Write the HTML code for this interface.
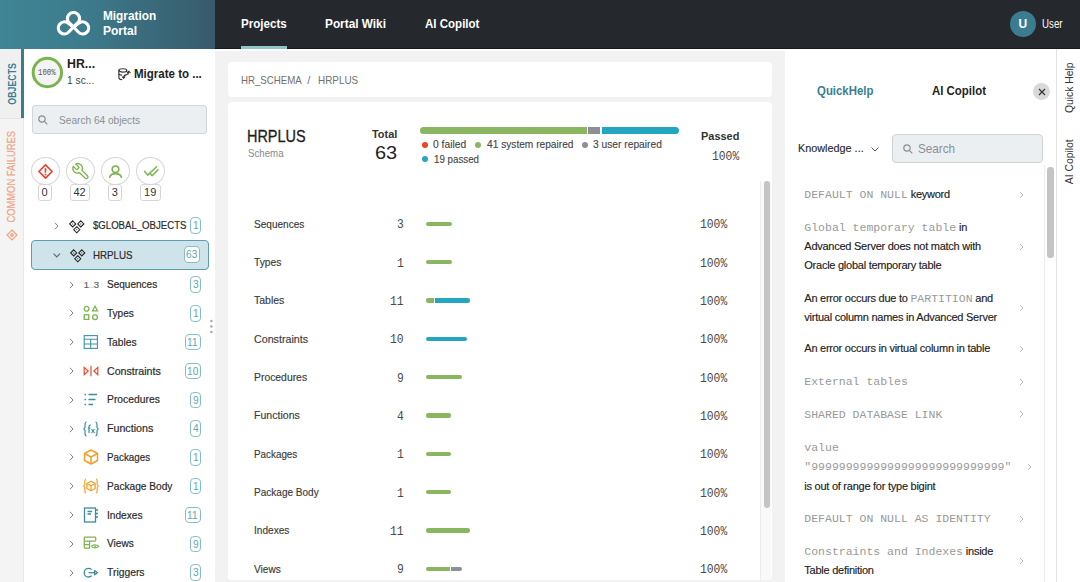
<!DOCTYPE html>
<html><head><meta charset="utf-8"><style>
*{box-sizing:border-box;margin:0;padding:0}
html,body{width:1080px;height:582px;overflow:hidden;background:#f2f2f2;font-family:"Liberation Sans",sans-serif}
.b{position:absolute}
.t{position:absolute;white-space:nowrap;transform-origin:0 0}
.vt{position:absolute;display:flex;align-items:center;justify-content:center}
.vt span{display:block;transform:rotate(-90deg);white-space:nowrap;line-height:1}
.m{font-family:"Liberation Mono",monospace;color:#999;-webkit-text-stroke:0;font-size:11.5px;letter-spacing:0}
</style></head><body>
<div class="b" style="left:0px;top:0px;width:1080px;height:49px;background:#25282d"></div>
<div class="b" style="left:0px;top:0px;width:215px;height:49px;background:linear-gradient(90deg,#3f8595 0%,#3c7b8c 40%,#3a6b7c 68%,#385a6b 100%)"></div>
<svg class="b" style="left:50px;top:5px;" width="45" height="37" viewBox="0 0 45 37"><g fill="none" stroke="#fff" stroke-width="3.2" stroke-linejoin="round"><path d="M23.50 22.00 L27.69 18.03 A6.1 6.1 0 1 0 19.31 18.03 Z"/><path d="M23.50 22.00 L17.87 18.01 A6.0 6.0 0 1 0 18.76 27.02 Z"/><path d="M23.50 22.00 L28.24 27.02 A6.0 6.0 0 1 0 29.13 18.01 Z"/></g></svg>
<div class="t" style="left:103.20px;top:9.82px;font-size:12.5px;line-height:12.5px;color:#fff;font-weight:bold;transform:scaleX(0.944);">Migration</div>
<div class="t" style="left:103.20px;top:24.62px;font-size:12.5px;line-height:12.5px;color:#fff;font-weight:bold;transform:scaleX(0.960);">Portal</div>
<div class="t" style="left:240.60px;top:17.82px;font-size:12.5px;line-height:12.5px;color:#fff;font-weight:bold;transform:scaleX(0.929);">Projects</div>
<div class="t" style="left:325.30px;top:17.82px;font-size:12.5px;line-height:12.5px;color:#fff;font-weight:bold;transform:scaleX(0.945);">Portal Wiki</div>
<div class="t" style="left:424.80px;top:17.82px;font-size:12.5px;line-height:12.5px;color:#fff;font-weight:bold;transform:scaleX(0.922);">AI Copilot</div>
<div class="b" style="left:215px;top:48px;width:865px;height:1px;background:#17191d"></div>
<div class="b" style="left:241px;top:46px;width:46px;height:3px;background:#8ec6c9"></div>
<div class="b" style="left:1010px;top:11px;width:26px;height:26px;background:#3a7d90;border-radius:50%"></div>
<div class="t" style="left:1018.50px;top:17.74px;font-size:12px;line-height:12px;color:#fff;font-weight:bold;">U</div>
<div class="t" style="left:1041.50px;top:17.74px;font-size:12px;line-height:12px;color:#fff;transform:scaleX(0.810);">User</div>
<div class="b" style="left:0px;top:49px;width:24px;height:533px;background:#f4f4f4"></div>
<div class="b" style="left:0px;top:49px;width:21px;height:69px;background:#f0f0f0"></div>
<div class="b" style="left:21px;top:49px;width:3px;height:69px;background:#3a7d90"></div>
<div class="b" style="left:0px;top:118px;width:23px;height:1px;background:#e2e2e2"></div>
<div class="b" style="left:23px;top:118px;width:1px;height:464px;background:#e6e6e6"></div>
<div class="vt" style="left:5.5px;top:62px;width:14px;height:43px;color:#3a7d90"><span style="font-size:11.8px;font-weight:bold;transform:rotate(-90deg) scaleX(0.745)">OBJECTS</span></div>
<div class="vt" style="left:5.5px;top:130px;width:14px;height:93px;color:#f0a383"><span style="font-size:11.5px;transform:rotate(-90deg) scaleX(0.814);-webkit-text-stroke:0.2px #f0a383">COMMON FAILURES</span></div>
<svg class="b" style="left:6px;top:229px;" width="12" height="12" viewBox="0 0 12 12"><g fill="none" stroke="#f0a383" stroke-width="1.2"><path d="M6 1 L11 6 L6 11 L1 6 Z"/><path d="M4.5 6 L6 4.5 L7.5 6 L6 7.5Z"/></g></svg>
<div class="b" style="left:24px;top:49px;width:191px;height:533px;background:#fff"></div>
<svg class="b" style="left:31px;top:56px;" width="33" height="33" viewBox="0 0 33 33"><circle cx="16.35" cy="16.5" r="14.2" fill="#f4f4f4" stroke="#7cb34f" stroke-width="3"/></svg>
<div class="t" style="left:38.00px;top:69.31px;font-size:8.6px;line-height:8.6px;color:#555;font-family:'Liberation Mono',monospace;transform:scaleX(0.850);">100%</div>
<div class="t" style="left:67.30px;top:57.92px;font-size:12.5px;line-height:12.5px;color:#222;font-weight:bold;transform:scaleX(0.986);">HR...</div>
<div class="t" style="left:67.30px;top:75.09px;font-size:11px;line-height:11px;color:#444;transform:scaleX(0.930);">1 sc...</div>
<svg class="b" style="left:114px;top:64px;" width="20" height="20" viewBox="0 0 20 20"><g fill="none" stroke="#333" stroke-width="1.1" stroke-linecap="round"><ellipse cx="8.8" cy="6.4" rx="3.9" ry="1.7"/><path d="M4.9 6.4 V13.5 C4.9 15 6.3 15.6 7.8 15.6"/><path d="M4.9 10 C5.2 10.8 6.4 11.1 7.6 11.1"/><path d="M12.7 6.4 V7.5"/><path d="M9.6 13.6 C9.8 11.6 11 10.8 12.6 10.6 C13.8 10.4 14.6 9.6 14.8 8.2"/><path d="M13.3 8.6 L14.8 7.2 L16.2 8.6"/><path d="M8.3 12.8 L9.6 14.2 L10.9 12.8"/></g></svg>
<div class="t" style="left:134.00px;top:67.82px;font-size:12.5px;line-height:12.5px;color:#222;font-weight:bold;transform:scaleX(0.921);">Migrate to ...</div>
<div class="b" style="left:32px;top:105px;width:175px;height:29px;background:#eceff1;border:1px solid #d3d6d8;border-radius:3px"></div>
<svg class="b" style="left:38px;top:115px;" width="10" height="10" viewBox="0 0 10 10"><g fill="none" stroke="#8a8f94" stroke-width="1.2"><circle cx="4" cy="4" r="3.2"/><path d="M6.3 6.3 L9.3 9.3"/></g></svg>
<div class="t" style="left:58.50px;top:114.59px;font-size:11px;line-height:11px;color:#8a8f94;transform:scaleX(0.920);">Search 64 objects</div>
<div class="b" style="left:30.5px;top:156.5px;width:29px;height:28.5px;border:1px solid #d6d6d6;border-radius:50%;background:#fff"></div>
<svg class="b" style="left:30.5px;top:156.5px;" width="29" height="29" viewBox="0 0 29 29"><g fill="none" stroke="#e8452c" stroke-width="1.7"><path d="M14.5 7.9 L21.1 14.5 L14.5 21.1 L7.9 14.5Z" stroke-linejoin="round"/></g><path d="M14.5 11.2 V15.6" stroke="#e8452c" stroke-width="1.7"/><circle cx="14.5" cy="17.6" r="1" fill="#e8452c"/></svg>
<div class="b" style="left:65.5px;top:156.5px;width:29px;height:28.5px;border:1px solid #d6d6d6;border-radius:50%;background:#fff"></div>
<svg class="b" style="left:65.5px;top:156.5px;" width="29" height="29" viewBox="0 0 29 29"><svg x="5.3" y="5" width="19" height="19" viewBox="0 0 24 24"><g transform="translate(24,0) scale(-1,1)"><path d="M14.7 6.3a1 1 0 0 0 0 1.4l1.6 1.6a1 1 0 0 0 1.4 0l3.77-3.77a6 6 0 0 1-7.94 7.94l-6.91 6.91a2.12 2.12 0 0 1-3-3l6.91-6.91a6 6 0 0 1 7.94-7.94l-3.76 3.76z" fill="none" stroke="#7cb34f" stroke-width="1.7" stroke-linejoin="round"/></g></svg></svg>
<div class="b" style="left:100.5px;top:156.5px;width:29px;height:28.5px;border:1px solid #d6d6d6;border-radius:50%;background:#fff"></div>
<svg class="b" style="left:100.5px;top:156.5px;" width="29" height="29" viewBox="0 0 29 29"><g fill="none" stroke="#7cb34f" stroke-width="1.6" stroke-linecap="round"><circle cx="14.5" cy="12.3" r="3.3"/><path d="M8.6 20.2 C9.4 17.8 11.6 16.6 14.5 16.6 C17.4 16.6 19.6 17.8 20.4 20.2"/></g></svg>
<div class="b" style="left:135.5px;top:156.5px;width:29px;height:28.5px;border:1px solid #d6d6d6;border-radius:50%;background:#fff"></div>
<svg class="b" style="left:135.5px;top:156.5px;" width="29" height="29" viewBox="0 0 29 29"><g fill="none" stroke="#7cb34f" stroke-width="1.5" stroke-linecap="round" stroke-linejoin="round"><path d="M8.5 14.3 L11.7 18.1 L20.6 9.8"/><path d="M14.1 16.6 L16.1 18.7 L21.9 12.9"/></g></svg>
<div class="b" style="left:38px;top:184px;width:14px;height:17px;border:1px solid #d6d6d6;border-radius:3px;background:#fff"></div>
<div class="t" style="left:41.50px;top:187.39px;font-size:11px;line-height:11px;color:#333;">0</div>
<div class="b" style="left:70px;top:184px;width:20px;height:17px;border:1px solid #d6d6d6;border-radius:3px;background:#fff"></div>
<div class="t" style="left:73.45px;top:187.39px;font-size:11px;line-height:11px;color:#333;">42</div>
<div class="b" style="left:108px;top:184px;width:14px;height:17px;border:1px solid #d6d6d6;border-radius:3px;background:#fff"></div>
<div class="t" style="left:111.80px;top:187.39px;font-size:11px;line-height:11px;color:#333;">3</div>
<div class="b" style="left:140px;top:184px;width:21px;height:17px;border:1px solid #d6d6d6;border-radius:3px;background:#fff"></div>
<div class="t" style="left:144.10px;top:187.39px;font-size:11px;line-height:11px;color:#333;">19</div>
<svg class="b" style="left:54px;top:221.5px;" width="6" height="8" viewBox="0 0 6 8"><path d="M1 0.8 L4 4 L1 7.2" fill="none" stroke="#808080" stroke-width="1"/></svg>
<svg class="b" style="left:69px;top:218.5px;" width="16" height="16" viewBox="0 0 16 16"><path d="M3.7 1.85 L6.75 4.9 L3.7 7.95 L0.65 4.9Z M11.8 1.85 L14.85 4.9 L11.8 7.95 L8.75 4.9Z M7.75 7.70 L10.80 10.75 L7.75 13.80 L4.70 10.75Z" fill="none" stroke="#222" stroke-width="1.05"/><path d="M3.7 4.15 L4.45 4.9 L3.7 5.65 L2.95 4.9Z M11.8 4.15 L12.55 4.9 L11.8 5.65 L11.05 4.9Z M7.75 10.00 L8.50 10.75 L7.75 11.50 L7.00 10.75Z" fill="#444"/></svg>
<div class="t" style="left:93.00px;top:220.49px;font-size:11px;line-height:11px;color:#2b2b2b;transform:scaleX(0.873);-webkit-text-stroke:0.2px #2b2b2b;">$GLOBAL_OBJECTS</div>
<div class="b" style="left:190px;top:217.3px;width:11px;height:16.5px;border:1px solid #86bfc3;border-radius:4px;background:#fff"></div>
<div class="t" style="left:192.50px;top:220.49px;font-size:11px;line-height:11px;color:#62a6ac;transform:scaleX(0.920);">1</div>
<div class="b" style="left:30.5px;top:240px;width:178.5px;height:30px;background:#cfe3ea;border:1px solid #5e9cab;border-radius:4px"></div>
<svg class="b" style="left:53px;top:253px;" width="8" height="5" viewBox="0 0 8 5"><path d="M0.6 0.6 L3.8 3.9 L7 0.6" fill="none" stroke="#666" stroke-width="1.1"/></svg>
<svg class="b" style="left:69.5px;top:248px;" width="16" height="16" viewBox="0 0 16 16"><path d="M3.7 1.85 L6.75 4.9 L3.7 7.95 L0.65 4.9Z M11.8 1.85 L14.85 4.9 L11.8 7.95 L8.75 4.9Z M7.75 7.70 L10.80 10.75 L7.75 13.80 L4.70 10.75Z" fill="none" stroke="#222" stroke-width="1.05"/><path d="M3.7 4.15 L4.45 4.9 L3.7 5.65 L2.95 4.9Z M11.8 4.15 L12.55 4.9 L11.8 5.65 L11.05 4.9Z M7.75 10.00 L8.50 10.75 L7.75 11.50 L7.00 10.75Z" fill="#444"/></svg>
<div class="t" style="left:93.30px;top:249.59px;font-size:11px;line-height:11px;color:#2b2b2b;transform:scaleX(0.885);-webkit-text-stroke:0.2px #2b2b2b;">HRPLUS</div>
<div class="b" style="left:184px;top:246.3px;width:16px;height:16.5px;border:1px solid #86bfc3;border-radius:4px;background:#fff"></div>
<div class="t" style="left:186.00px;top:249.49px;font-size:11px;line-height:11px;color:#62a6ac;transform:scaleX(0.920);">63</div>
<svg class="b" style="left:68.5px;top:280.6px;" width="6" height="8" viewBox="0 0 6 8"><path d="M1 0.8 L4 4 L1 7.2" fill="none" stroke="#808080" stroke-width="1"/></svg>
<div class="t" style="left:83.80px;top:280.07px;font-size:9.6px;line-height:9.6px;color:#666;-webkit-text-stroke:0.2px #666;">1</div>
<div class="t" style="left:93.80px;top:280.07px;font-size:9.6px;line-height:9.6px;color:#666;-webkit-text-stroke:0.2px #666;">3</div>
<div class="b" style="left:89px;top:286.8px;width:4.5px;height:1px;background:#dde2e6"></div>
<div class="t" style="left:107.20px;top:279.29px;font-size:11px;line-height:11px;color:#2b2b2b;transform:scaleX(0.911);-webkit-text-stroke:0.2px #2b2b2b;">Sequences</div>
<div class="b" style="left:190px;top:276.3px;width:11px;height:16.5px;border:1px solid #86bfc3;border-radius:4px;background:#fff"></div>
<div class="t" style="left:192.50px;top:279.49px;font-size:11px;line-height:11px;color:#62a6ac;transform:scaleX(0.920);">3</div>
<svg class="b" style="left:68.5px;top:309.4px;" width="6" height="8" viewBox="0 0 6 8"><path d="M1 0.8 L4 4 L1 7.2" fill="none" stroke="#808080" stroke-width="1"/></svg>
<svg class="b" style="left:83px;top:305.4px;" width="16" height="16" viewBox="0 0 16 16"><g fill="none" stroke="#7cb34f" stroke-width="1.3"><circle cx="3.6" cy="3.8" r="2.4"/><path d="M12 1.2 L14.5 5.8 L9.5 5.8Z"/><rect x="1.2" y="9.8" width="4.6" height="4.6"/><circle cx="12" cy="12.2" r="2.4"/></g></svg>
<div class="t" style="left:107.20px;top:308.09px;font-size:11px;line-height:11px;color:#2b2b2b;transform:scaleX(0.913);-webkit-text-stroke:0.2px #2b2b2b;">Types</div>
<div class="b" style="left:190px;top:305.1px;width:11px;height:16.5px;border:1px solid #86bfc3;border-radius:4px;background:#fff"></div>
<div class="t" style="left:192.50px;top:308.29px;font-size:11px;line-height:11px;color:#62a6ac;transform:scaleX(0.920);">1</div>
<svg class="b" style="left:68.5px;top:338.2px;" width="6" height="8" viewBox="0 0 6 8"><path d="M1 0.8 L4 4 L1 7.2" fill="none" stroke="#808080" stroke-width="1"/></svg>
<svg class="b" style="left:83px;top:334.2px;" width="16" height="16" viewBox="0 0 16 16"><g fill="none" stroke="#3f93a6" stroke-width="1.1"><rect x="1.2" y="1.6" width="13.2" height="12.8"/><path d="M1 5.2 H14.5 M1 10 H14.5 M7.7 5.2 V14.5"/></g></svg>
<div class="t" style="left:107.20px;top:336.89px;font-size:11px;line-height:11px;color:#2b2b2b;transform:scaleX(0.931);-webkit-text-stroke:0.2px #2b2b2b;">Tables</div>
<div class="b" style="left:185px;top:333.9px;width:16px;height:16.5px;border:1px solid #86bfc3;border-radius:4px;background:#fff"></div>
<div class="t" style="left:187.00px;top:337.09px;font-size:11px;line-height:11px;color:#62a6ac;transform:scaleX(0.920);">11</div>
<svg class="b" style="left:68.5px;top:367.0px;" width="6" height="8" viewBox="0 0 6 8"><path d="M1 0.8 L4 4 L1 7.2" fill="none" stroke="#808080" stroke-width="1"/></svg>
<svg class="b" style="left:83px;top:363.0px;" width="16" height="16" viewBox="0 0 16 16"><g fill="none" stroke="#e8452c" stroke-width="1.15"><path d="M1.2 4.4 L5.2 8 L1.2 11.6Z"/><path d="M8 2.8 V13.2"/><path d="M14.8 4.4 L10.8 8 L14.8 11.6Z"/></g></svg>
<div class="t" style="left:107.20px;top:365.69px;font-size:11px;line-height:11px;color:#2b2b2b;transform:scaleX(0.967);-webkit-text-stroke:0.2px #2b2b2b;">Constraints</div>
<div class="b" style="left:185px;top:362.7px;width:16px;height:16.5px;border:1px solid #86bfc3;border-radius:4px;background:#fff"></div>
<div class="t" style="left:187.00px;top:365.89px;font-size:11px;line-height:11px;color:#62a6ac;transform:scaleX(0.920);">10</div>
<svg class="b" style="left:68.5px;top:395.8px;" width="6" height="8" viewBox="0 0 6 8"><path d="M1 0.8 L4 4 L1 7.2" fill="none" stroke="#808080" stroke-width="1"/></svg>
<svg class="b" style="left:83px;top:391.8px;" width="16" height="16" viewBox="0 0 16 16"><g stroke="#3a8ea0" stroke-width="1.3"><path d="M5.5 2.5 H14 M5.5 7.5 H12.5 M5.5 12.5 H10"/><path d="M1.5 2.5 H3 M1.5 7.5 H3 M1.5 12.5 H3"/></g></svg>
<div class="t" style="left:107.20px;top:394.49px;font-size:11px;line-height:11px;color:#2b2b2b;transform:scaleX(0.939);-webkit-text-stroke:0.2px #2b2b2b;">Procedures</div>
<div class="b" style="left:190px;top:391.5px;width:11px;height:16.5px;border:1px solid #86bfc3;border-radius:4px;background:#fff"></div>
<div class="t" style="left:192.50px;top:394.69px;font-size:11px;line-height:11px;color:#62a6ac;transform:scaleX(0.920);">9</div>
<svg class="b" style="left:68.5px;top:424.6px;" width="6" height="8" viewBox="0 0 6 8"><path d="M1 0.8 L4 4 L1 7.2" fill="none" stroke="#808080" stroke-width="1"/></svg>
<svg class="b" style="left:83px;top:420.6px;" width="16" height="16" viewBox="0 0 16 16"><g fill="none" stroke="#3a8ea0" stroke-width="1.2"><path d="M3.5 1 C2 1 2 2.5 2 4 V6.5 L0.8 8 L2 9.5 V12 C2 13.5 2 15 3.5 15"/><path d="M12.5 1 C14 1 14 2.5 14 4 V6.5 L15.2 8 L14 9.5 V12 C14 13.5 14 15 12.5 15"/><path d="M8 4 C6.5 4 6 4.8 6 6 V12 M5 7 H7.5"/><path d="M8.5 8 L11.5 12 M11.5 8 L8.5 12"/></g></svg>
<div class="t" style="left:107.20px;top:423.29px;font-size:11px;line-height:11px;color:#2b2b2b;transform:scaleX(0.969);-webkit-text-stroke:0.2px #2b2b2b;">Functions</div>
<div class="b" style="left:190px;top:420.3px;width:11px;height:16.5px;border:1px solid #86bfc3;border-radius:4px;background:#fff"></div>
<div class="t" style="left:192.50px;top:423.49px;font-size:11px;line-height:11px;color:#62a6ac;transform:scaleX(0.920);">4</div>
<svg class="b" style="left:68.5px;top:453.4px;" width="6" height="8" viewBox="0 0 6 8"><path d="M1 0.8 L4 4 L1 7.2" fill="none" stroke="#808080" stroke-width="1"/></svg>
<svg class="b" style="left:83px;top:449.4px;" width="16" height="16" viewBox="0 0 16 16"><g fill="none" stroke="#f59f2a" stroke-width="1.5" stroke-linejoin="round"><path d="M8 1 L14.5 4.5 V11.5 L8 15 L1.5 11.5 V4.5Z"/><path d="M1.5 4.5 L8 8 L14.5 4.5 M8 8 V15"/></g></svg>
<div class="t" style="left:107.20px;top:452.09px;font-size:11px;line-height:11px;color:#2b2b2b;transform:scaleX(0.892);-webkit-text-stroke:0.2px #2b2b2b;">Packages</div>
<div class="b" style="left:190px;top:449.1px;width:11px;height:16.5px;border:1px solid #86bfc3;border-radius:4px;background:#fff"></div>
<div class="t" style="left:192.50px;top:452.29px;font-size:11px;line-height:11px;color:#62a6ac;transform:scaleX(0.920);">1</div>
<svg class="b" style="left:68.5px;top:482.2px;" width="6" height="8" viewBox="0 0 6 8"><path d="M1 0.8 L4 4 L1 7.2" fill="none" stroke="#808080" stroke-width="1"/></svg>
<svg class="b" style="left:83px;top:478.2px;" width="16" height="16" viewBox="0 0 16 16"><g fill="none" stroke="#f59f2a" stroke-width="1.2" stroke-linejoin="round"><path d="M3 1 C1.8 1 1.8 2.5 1.8 4 V6.5 L0.6 8 L1.8 9.5 V12 C1.8 13.5 1.8 15 3 15"/><path d="M13 1 C14.2 1 14.2 2.5 14.2 4 V6.5 L15.4 8 L14.2 9.5 V12 C14.2 13.5 14.2 15 13 15"/><path d="M8 3.2 L12.1 5.5 V10.5 L8 12.8 L3.9 10.5 V5.5Z" stroke-width="1.3"/><path d="M3.9 5.5 L8 7.8 L12.1 5.5 M8 7.8 V12.8" stroke-width="1.3"/></g></svg>
<div class="t" style="left:107.20px;top:480.89px;font-size:11px;line-height:11px;color:#2b2b2b;transform:scaleX(0.922);-webkit-text-stroke:0.2px #2b2b2b;">Package Body</div>
<div class="b" style="left:190px;top:477.9px;width:11px;height:16.5px;border:1px solid #86bfc3;border-radius:4px;background:#fff"></div>
<div class="t" style="left:192.50px;top:481.09px;font-size:11px;line-height:11px;color:#62a6ac;transform:scaleX(0.920);">1</div>
<svg class="b" style="left:68.5px;top:511.0px;" width="6" height="8" viewBox="0 0 6 8"><path d="M1 0.8 L4 4 L1 7.2" fill="none" stroke="#808080" stroke-width="1"/></svg>
<svg class="b" style="left:83px;top:507.0px;" width="16" height="16" viewBox="0 0 16 16"><g fill="none" stroke="#3a8ea0" stroke-width="1.3"><rect x="1.5" y="1" width="11" height="14"/><path d="M4.5 4.5 H9 M4.5 7 H8"/><path d="M13 3 H15 M13 6.5 H15 M13 10 H15"/></g></svg>
<div class="t" style="left:107.20px;top:509.69px;font-size:11px;line-height:11px;color:#2b2b2b;transform:scaleX(0.923);-webkit-text-stroke:0.2px #2b2b2b;">Indexes</div>
<div class="b" style="left:185px;top:506.7px;width:16px;height:16.5px;border:1px solid #86bfc3;border-radius:4px;background:#fff"></div>
<div class="t" style="left:187.00px;top:509.89px;font-size:11px;line-height:11px;color:#62a6ac;transform:scaleX(0.920);">11</div>
<svg class="b" style="left:68.5px;top:539.8px;" width="6" height="8" viewBox="0 0 6 8"><path d="M1 0.8 L4 4 L1 7.2" fill="none" stroke="#808080" stroke-width="1"/></svg>
<svg class="b" style="left:83px;top:535.8px;" width="16" height="16" viewBox="0 0 16 16"><g fill="none" stroke="#7cb34f" stroke-width="1.25" stroke-linejoin="round"><rect x="1.3" y="1.2" width="11.4" height="3.9" rx="0.8"/><path d="M1.3 5.1 V11.4 Q1.3 12.2 2.1 12.2 H6.6 V5.1 M1.3 8.7 H6.6"/><path d="M8.4 10.3 C9.6 8.3 14.4 8.3 15.6 10.3 C14.4 12.3 9.6 12.3 8.4 10.3Z"/></g><circle cx="12" cy="10.3" r="0.9" fill="#7cb34f"/></svg>
<div class="t" style="left:107.20px;top:538.49px;font-size:11px;line-height:11px;color:#2b2b2b;transform:scaleX(0.917);-webkit-text-stroke:0.2px #2b2b2b;">Views</div>
<div class="b" style="left:190px;top:535.5px;width:11px;height:16.5px;border:1px solid #86bfc3;border-radius:4px;background:#fff"></div>
<div class="t" style="left:192.50px;top:538.69px;font-size:11px;line-height:11px;color:#62a6ac;transform:scaleX(0.920);">9</div>
<svg class="b" style="left:68.5px;top:568.6px;" width="6" height="8" viewBox="0 0 6 8"><path d="M1 0.8 L4 4 L1 7.2" fill="none" stroke="#808080" stroke-width="1"/></svg>
<svg class="b" style="left:83px;top:564.6px;" width="16" height="16" viewBox="0 0 16 16"><g fill="none" stroke="#3a8ea0" stroke-width="1.3" stroke-linejoin="round"><path d="M8.6 4.6 C7.8 3.8 6.7 3.4 5.4 3.4 C3 3.4 1.2 5.3 1.2 7.7 C1.2 10.1 3 12 5.4 12 C6.7 12 7.8 11.6 8.6 10.8"/><path d="M5.6 7.7 H11.6"/><path d="M11.6 5.6 L14.6 7.7 L11.6 9.8Z"/></g></svg>
<div class="t" style="left:107.20px;top:567.29px;font-size:11px;line-height:11px;color:#2b2b2b;transform:scaleX(0.940);-webkit-text-stroke:0.2px #2b2b2b;">Triggers</div>
<div class="b" style="left:190px;top:564.3px;width:11px;height:16.5px;border:1px solid #86bfc3;border-radius:4px;background:#fff"></div>
<div class="t" style="left:192.50px;top:567.49px;font-size:11px;line-height:11px;color:#62a6ac;transform:scaleX(0.920);">3</div>
<svg class="b" style="left:209px;top:318px;" width="5" height="17" viewBox="0 0 5 17"><g fill="#a8a8a8"><circle cx="2.4" cy="3.1" r="1.25"/><circle cx="2.4" cy="8.6" r="1.25"/><circle cx="2.4" cy="14" r="1.25"/></g></svg>
<div class="b" style="left:215px;top:49px;width:570px;height:533px;background:#f2f2f2"></div>
<div class="b" style="left:215px;top:49px;width:865px;height:2px;background:#fff"></div>
<div class="b" style="left:228px;top:62px;width:544px;height:35px;background:#fff;border-radius:4px"></div>
<div class="t" style="left:241.00px;top:74.99px;font-size:11px;line-height:11px;color:#707070;transform:scaleX(0.880);">HR_SCHEMA</div>
<div class="t" style="left:307.20px;top:74.99px;font-size:11px;line-height:11px;color:#707070;">/</div>
<div class="t" style="left:317.80px;top:74.99px;font-size:11px;line-height:11px;color:#707070;transform:scaleX(0.900);">HRPLUS</div>
<div class="b" style="left:228px;top:102px;width:544px;height:478px;background:#fff;border-radius:4px"></div>
<div class="t" style="left:247.30px;top:128.76px;font-size:16px;line-height:16px;color:#1e1e1e;transform:scaleX(0.903);-webkit-text-stroke:0.3px #1e1e1e;">HRPLUS</div>
<div class="t" style="left:248.00px;top:147.81px;font-size:10.5px;line-height:10.5px;color:#888;transform:scaleX(0.923);">Schema</div>
<div class="t" style="left:372.00px;top:128.91px;font-size:10.5px;line-height:10.5px;color:#333;font-weight:bold;transform:scaleX(1.040);">Total</div>
<div class="t" style="left:375.00px;top:144.34px;font-size:18.5px;line-height:18.5px;color:#222;transform:scaleX(1.080);">63</div>
<div class="b" style="left:420px;top:127px;width:167px;height:7px;background:#8ab561;border-radius:3.5px 0 0 3.5px"></div>
<div class="b" style="left:588px;top:127px;width:12px;height:7px;background:#8e8e96"></div>
<div class="b" style="left:602px;top:127px;width:77px;height:7px;background:#24a5c0;border-radius:0 3.5px 3.5px 0"></div>
<div class="b" style="left:422px;top:141.6px;width:6px;height:6px;background:#f0441f;border-radius:50%"></div>
<div class="b" style="left:475.3px;top:141.6px;width:6px;height:6px;background:#8ab561;border-radius:50%"></div>
<div class="b" style="left:582.4px;top:141.6px;width:6px;height:6px;background:#8e8e96;border-radius:50%"></div>
<div class="b" style="left:422px;top:156px;width:6px;height:6px;background:#24a5c0;border-radius:50%"></div>
<div class="t" style="left:433.30px;top:139.33px;font-size:10.6px;line-height:10.6px;color:#444;transform:scaleX(0.970);-webkit-text-stroke:0.12px #444;">0 failed</div>
<div class="t" style="left:486.50px;top:139.33px;font-size:10.6px;line-height:10.6px;color:#444;transform:scaleX(0.960);-webkit-text-stroke:0.12px #444;">41 system repaired</div>
<div class="t" style="left:593.40px;top:139.33px;font-size:10.6px;line-height:10.6px;color:#444;transform:scaleX(0.967);-webkit-text-stroke:0.12px #444;">3 user repaired</div>
<div class="t" style="left:433.70px;top:153.83px;font-size:10.6px;line-height:10.6px;color:#444;transform:scaleX(0.920);-webkit-text-stroke:0.12px #444;">19 passed</div>
<div class="t" style="left:701.00px;top:130.97px;font-size:11.5px;line-height:11.5px;color:#333;font-weight:bold;transform:scaleX(0.953);">Passed</div>
<div class="t" style="left:712.30px;top:151.45px;font-size:12.2px;line-height:12.2px;color:#4a4a4a;font-family:'Liberation Mono',monospace;transform:scaleX(0.930);">100%</div>
<div class="b" style="left:760px;top:181px;width:11px;height:399px;background:#f9f9f9;border-left:1px solid #ececec"></div>
<div class="b" style="left:763.5px;top:181px;width:6.5px;height:327px;background:#c4c4c4;border-radius:3.25px"></div>
<div class="t" style="left:253.50px;top:218.67px;font-size:10.9px;line-height:10.9px;color:#3a3a3a;transform:scaleX(0.923);-webkit-text-stroke:0.15px #3a3a3a;">Sequences</div>
<div class="t" style="left:397.15px;top:219.35px;font-size:12.2px;line-height:12.2px;color:#4a4a4a;font-family:'Liberation Mono',monospace;transform:scaleX(0.930);">3</div>
<div class="b" style="left:426.2px;top:221.6px;width:25.4px;height:4.5px;background:#8ab561;border-radius:2.25px"></div>
<div class="t" style="left:700.20px;top:219.35px;font-size:12.2px;line-height:12.2px;color:#4a4a4a;font-family:'Liberation Mono',monospace;transform:scaleX(0.930);">100%</div>
<div class="t" style="left:253.50px;top:257.00px;font-size:10.9px;line-height:10.9px;color:#3a3a3a;transform:scaleX(0.944);-webkit-text-stroke:0.15px #3a3a3a;">Types</div>
<div class="t" style="left:397.15px;top:257.68px;font-size:12.2px;line-height:12.2px;color:#4a4a4a;font-family:'Liberation Mono',monospace;transform:scaleX(0.930);">1</div>
<div class="b" style="left:426.2px;top:259.9px;width:25.4px;height:4.5px;background:#8ab561;border-radius:2.25px"></div>
<div class="t" style="left:700.20px;top:257.68px;font-size:12.2px;line-height:12.2px;color:#4a4a4a;font-family:'Liberation Mono',monospace;transform:scaleX(0.930);">100%</div>
<div class="t" style="left:253.50px;top:295.33px;font-size:10.9px;line-height:10.9px;color:#3a3a3a;transform:scaleX(0.965);-webkit-text-stroke:0.15px #3a3a3a;">Tables</div>
<div class="t" style="left:390.30px;top:296.01px;font-size:12.2px;line-height:12.2px;color:#4a4a4a;font-family:'Liberation Mono',monospace;transform:scaleX(0.930);">11</div>
<div class="b" style="left:426.2px;top:298.3px;width:7.6px;height:4.5px;background:#8ab561;border-radius:2.25px 0 0 2.25px"></div>
<div class="b" style="left:435.4px;top:298.3px;width:34.8px;height:4.5px;background:#24a5c0;border-radius:0 2.25px 2.25px 0"></div>
<div class="t" style="left:700.20px;top:296.01px;font-size:12.2px;line-height:12.2px;color:#4a4a4a;font-family:'Liberation Mono',monospace;transform:scaleX(0.930);">100%</div>
<div class="t" style="left:253.50px;top:333.66px;font-size:10.9px;line-height:10.9px;color:#3a3a3a;transform:scaleX(0.981);-webkit-text-stroke:0.15px #3a3a3a;">Constraints</div>
<div class="t" style="left:390.30px;top:334.34px;font-size:12.2px;line-height:12.2px;color:#4a4a4a;font-family:'Liberation Mono',monospace;transform:scaleX(0.930);">10</div>
<div class="b" style="left:426.2px;top:336.6px;width:40.6px;height:4.5px;background:#24a5c0;border-radius:2.25px"></div>
<div class="t" style="left:700.20px;top:334.34px;font-size:12.2px;line-height:12.2px;color:#4a4a4a;font-family:'Liberation Mono',monospace;transform:scaleX(0.930);">100%</div>
<div class="t" style="left:253.50px;top:371.99px;font-size:10.9px;line-height:10.9px;color:#3a3a3a;transform:scaleX(0.953);-webkit-text-stroke:0.15px #3a3a3a;">Procedures</div>
<div class="t" style="left:397.15px;top:372.67px;font-size:12.2px;line-height:12.2px;color:#4a4a4a;font-family:'Liberation Mono',monospace;transform:scaleX(0.930);">9</div>
<div class="b" style="left:426.2px;top:374.9px;width:36.2px;height:4.5px;background:#8ab561;border-radius:2.25px"></div>
<div class="t" style="left:700.20px;top:372.67px;font-size:12.2px;line-height:12.2px;color:#4a4a4a;font-family:'Liberation Mono',monospace;transform:scaleX(0.930);">100%</div>
<div class="t" style="left:253.50px;top:410.32px;font-size:10.9px;line-height:10.9px;color:#3a3a3a;transform:scaleX(0.970);-webkit-text-stroke:0.15px #3a3a3a;">Functions</div>
<div class="t" style="left:397.15px;top:411.00px;font-size:12.2px;line-height:12.2px;color:#4a4a4a;font-family:'Liberation Mono',monospace;transform:scaleX(0.930);">4</div>
<div class="b" style="left:426.2px;top:413.2px;width:25px;height:4.5px;background:#8ab561;border-radius:2.25px"></div>
<div class="t" style="left:700.20px;top:411.00px;font-size:12.2px;line-height:12.2px;color:#4a4a4a;font-family:'Liberation Mono',monospace;transform:scaleX(0.930);">100%</div>
<div class="t" style="left:253.50px;top:448.65px;font-size:10.9px;line-height:10.9px;color:#3a3a3a;transform:scaleX(0.905);-webkit-text-stroke:0.15px #3a3a3a;">Packages</div>
<div class="t" style="left:397.15px;top:449.33px;font-size:12.2px;line-height:12.2px;color:#4a4a4a;font-family:'Liberation Mono',monospace;transform:scaleX(0.930);">1</div>
<div class="b" style="left:426.2px;top:451.6px;width:25px;height:4.5px;background:#8ab561;border-radius:2.25px"></div>
<div class="t" style="left:700.20px;top:449.33px;font-size:12.2px;line-height:12.2px;color:#4a4a4a;font-family:'Liberation Mono',monospace;transform:scaleX(0.930);">100%</div>
<div class="t" style="left:253.50px;top:486.98px;font-size:10.9px;line-height:10.9px;color:#3a3a3a;transform:scaleX(0.921);-webkit-text-stroke:0.15px #3a3a3a;">Package Body</div>
<div class="t" style="left:397.15px;top:487.66px;font-size:12.2px;line-height:12.2px;color:#4a4a4a;font-family:'Liberation Mono',monospace;transform:scaleX(0.930);">1</div>
<div class="b" style="left:426.2px;top:489.9px;width:25px;height:4.5px;background:#8ab561;border-radius:2.25px"></div>
<div class="t" style="left:700.20px;top:487.66px;font-size:12.2px;line-height:12.2px;color:#4a4a4a;font-family:'Liberation Mono',monospace;transform:scaleX(0.930);">100%</div>
<div class="t" style="left:253.50px;top:525.31px;font-size:10.9px;line-height:10.9px;color:#3a3a3a;transform:scaleX(0.927);-webkit-text-stroke:0.15px #3a3a3a;">Indexes</div>
<div class="t" style="left:390.30px;top:525.99px;font-size:12.2px;line-height:12.2px;color:#4a4a4a;font-family:'Liberation Mono',monospace;transform:scaleX(0.930);">11</div>
<div class="b" style="left:426.2px;top:528.2px;width:44.2px;height:4.5px;background:#8ab561;border-radius:2.25px"></div>
<div class="t" style="left:700.20px;top:525.99px;font-size:12.2px;line-height:12.2px;color:#4a4a4a;font-family:'Liberation Mono',monospace;transform:scaleX(0.930);">100%</div>
<div class="t" style="left:253.50px;top:563.64px;font-size:10.9px;line-height:10.9px;color:#3a3a3a;transform:scaleX(0.927);-webkit-text-stroke:0.15px #3a3a3a;">Views</div>
<div class="t" style="left:397.15px;top:564.32px;font-size:12.2px;line-height:12.2px;color:#4a4a4a;font-family:'Liberation Mono',monospace;transform:scaleX(0.930);">9</div>
<div class="b" style="left:426.2px;top:566.6px;width:23.4px;height:4.5px;background:#8ab561;border-radius:2.25px 0 0 2.25px"></div>
<div class="b" style="left:451.2px;top:566.6px;width:11.1px;height:4.5px;background:#8e8e96;border-radius:0 2.25px 2.25px 0"></div>
<div class="t" style="left:700.20px;top:564.32px;font-size:12.2px;line-height:12.2px;color:#4a4a4a;font-family:'Liberation Mono',monospace;transform:scaleX(0.930);">100%</div>
<div class="b" style="left:785px;top:49px;width:272px;height:533px;background:#fff"></div>
<div class="t" style="left:817.00px;top:84.89px;font-size:12.3px;line-height:12.3px;color:#3a7d90;font-weight:bold;transform:scaleX(0.928);">QuickHelp</div>
<div class="t" style="left:931.50px;top:84.89px;font-size:12.3px;line-height:12.3px;color:#222;font-weight:bold;transform:scaleX(0.929);">AI Copilot</div>
<div class="b" style="left:1033px;top:83px;width:17px;height:17px;background:#d9d9d9;border-radius:50%"></div>
<svg class="b" style="left:1037.5px;top:87.5px;" width="8" height="8" viewBox="0 0 8 8"><path d="M1 1 L7 7 M7 1 L1 7" stroke="#333" stroke-width="1.2"/></svg>
<div class="t" style="left:797.60px;top:143.03px;font-size:11.3px;line-height:11.3px;color:#2b2b2b;transform:scaleX(0.959);-webkit-text-stroke:0.15px #2b2b2b;">Knowledge ...</div>
<svg class="b" style="left:871px;top:146.5px;" width="8" height="5" viewBox="0 0 8 5"><path d="M0.5 0.5 L4 4 L7.5 0.5" fill="none" stroke="#555" stroke-width="1"/></svg>
<div class="b" style="left:892px;top:134px;width:151px;height:28.6px;background:#eceff1;border:1px solid #d0d3d5;border-radius:4px"></div>
<svg class="b" style="left:903px;top:143.5px;" width="10" height="10" viewBox="0 0 10 10"><g fill="none" stroke="#8a8f94" stroke-width="1.2"><circle cx="4" cy="4" r="3.2"/><path d="M6.3 6.3 L9.3 9.3"/></g></svg>
<div class="t" style="left:918.00px;top:142.30px;font-size:13px;line-height:13px;color:#8a8f94;transform:scaleX(0.900);">Search</div>
<div class="b" style="left:1044px;top:165px;width:1px;height:417px;background:#ececec"></div>
<div class="b" style="left:1047px;top:167px;width:6.5px;height:91px;background:#c4c4c4;border-radius:3.25px"></div>
<div class="t" style="left:804.30px;top:189.39px;font-size:11px;line-height:11px;color:#222;letter-spacing:-0.25px;-webkit-text-stroke:0.15px #222;"><span class="m">DEFAULT ON NULL</span> keyword</div>
<svg class="b" style="left:1018.5px;top:190.7px;" width="6" height="8" viewBox="0 0 6 8"><path d="M1 1 L4 4 L1 7" fill="none" stroke="#bbb" stroke-width="1"/></svg>
<div class="t" style="left:804.30px;top:222.09px;font-size:11px;line-height:11px;color:#222;letter-spacing:-0.25px;-webkit-text-stroke:0.15px #222;"><span class="m">Global temporary table</span> in</div>
<div class="t" style="left:804.30px;top:241.29px;font-size:11px;line-height:11px;color:#222;letter-spacing:-0.25px;-webkit-text-stroke:0.15px #222;">Advanced Server does not match with</div>
<div class="t" style="left:804.30px;top:260.49px;font-size:11px;line-height:11px;color:#222;letter-spacing:-0.25px;-webkit-text-stroke:0.15px #222;">Oracle global temporary table</div>
<svg class="b" style="left:1018.5px;top:242.6px;" width="6" height="8" viewBox="0 0 6 8"><path d="M1 1 L4 4 L1 7" fill="none" stroke="#bbb" stroke-width="1"/></svg>
<div class="t" style="left:804.30px;top:292.89px;font-size:11px;line-height:11px;color:#222;letter-spacing:-0.25px;-webkit-text-stroke:0.15px #222;">An error occurs due to <span class="m">PARTITION</span> and</div>
<div class="t" style="left:804.30px;top:312.09px;font-size:11px;line-height:11px;color:#222;letter-spacing:-0.25px;-webkit-text-stroke:0.15px #222;">virtual column names in Advanced Server</div>
<svg class="b" style="left:1018.5px;top:303.8px;" width="6" height="8" viewBox="0 0 6 8"><path d="M1 1 L4 4 L1 7" fill="none" stroke="#bbb" stroke-width="1"/></svg>
<div class="t" style="left:804.30px;top:343.49px;font-size:11px;line-height:11px;color:#222;letter-spacing:-0.25px;-webkit-text-stroke:0.15px #222;">An error occurs in virtual column in table</div>
<svg class="b" style="left:1018.5px;top:344.8px;" width="6" height="8" viewBox="0 0 6 8"><path d="M1 1 L4 4 L1 7" fill="none" stroke="#bbb" stroke-width="1"/></svg>
<div class="t" style="left:804.30px;top:376.19px;font-size:11px;line-height:11px;color:#222;letter-spacing:-0.25px;-webkit-text-stroke:0.15px #222;"><span class="m">External tables</span></div>
<svg class="b" style="left:1018.5px;top:377.5px;" width="6" height="8" viewBox="0 0 6 8"><path d="M1 1 L4 4 L1 7" fill="none" stroke="#bbb" stroke-width="1"/></svg>
<div class="t" style="left:804.30px;top:408.99px;font-size:11px;line-height:11px;color:#222;letter-spacing:-0.25px;-webkit-text-stroke:0.15px #222;"><span class="m">SHARED DATABASE LINK</span></div>
<svg class="b" style="left:1018.5px;top:410.3px;" width="6" height="8" viewBox="0 0 6 8"><path d="M1 1 L4 4 L1 7" fill="none" stroke="#bbb" stroke-width="1"/></svg>
<div class="t" style="left:804.30px;top:442.19px;font-size:11px;line-height:11px;color:#222;letter-spacing:-0.25px;-webkit-text-stroke:0.15px #222;"><span class="m">value</span></div>
<div class="t" style="left:804.30px;top:461.39px;font-size:11px;line-height:11px;color:#222;letter-spacing:-0.25px;-webkit-text-stroke:0.15px #222;"><span class="m">"9999999999999999999999999999"</span></div>
<div class="t" style="left:804.30px;top:480.59px;font-size:11px;line-height:11px;color:#222;letter-spacing:-0.25px;-webkit-text-stroke:0.15px #222;">is out of range for type bigint</div>
<svg class="b" style="left:1026.5px;top:462.7px;" width="6" height="8" viewBox="0 0 6 8"><path d="M1 1 L4 4 L1 7" fill="none" stroke="#bbb" stroke-width="1"/></svg>
<div class="t" style="left:804.30px;top:513.49px;font-size:11px;line-height:11px;color:#222;letter-spacing:-0.25px;-webkit-text-stroke:0.15px #222;"><span class="m">DEFAULT ON NULL AS IDENTITY</span></div>
<svg class="b" style="left:1018.5px;top:514.8px;" width="6" height="8" viewBox="0 0 6 8"><path d="M1 1 L4 4 L1 7" fill="none" stroke="#bbb" stroke-width="1"/></svg>
<div class="t" style="left:804.30px;top:546.29px;font-size:11px;line-height:11px;color:#222;letter-spacing:-0.25px;-webkit-text-stroke:0.15px #222;"><span class="m">Constraints and Indexes</span> inside</div>
<div class="t" style="left:804.30px;top:565.49px;font-size:11px;line-height:11px;color:#222;letter-spacing:-0.25px;-webkit-text-stroke:0.15px #222;">Table definition</div>
<svg class="b" style="left:1018.5px;top:557.2px;" width="6" height="8" viewBox="0 0 6 8"><path d="M1 1 L4 4 L1 7" fill="none" stroke="#bbb" stroke-width="1"/></svg>
<div class="b" style="left:1056px;top:49px;width:24px;height:533px;background:#fff;border-left:1px solid #e2e2e2"></div>
<div class="vt" style="left:1060px;top:62px;width:20px;height:51px;color:#333"><span style="font-size:11.5px;transform:rotate(-90deg) scaleX(0.9)">Quick Help</span></div>
<div class="vt" style="left:1060px;top:139px;width:20px;height:46px;color:#333"><span style="font-size:11.5px;transform:rotate(-90deg) scaleX(0.9)">AI Copilot</span></div>
</body></html>
